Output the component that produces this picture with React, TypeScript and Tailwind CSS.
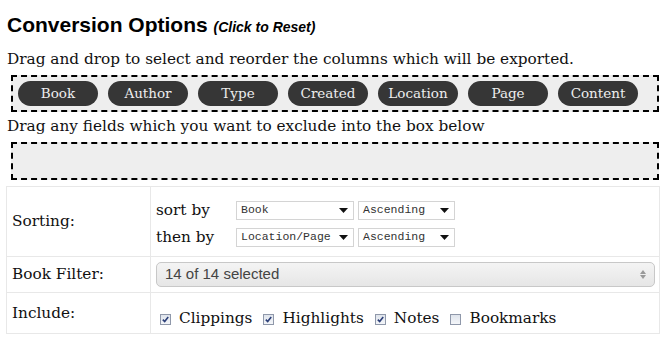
import React from "react";

const serif = "font-['DejaVu_Serif',Georgia,serif]";
const mono = "font-['Liberation_Mono','DejaVu_Sans_Mono',monospace]";

const columns = ["Book", "Author", "Type", "Created", "Location", "Page", "Content"];

const Select: React.FC<{ value: string; width: string }> = ({ value, width }) => (
    <div className={`${width} h-[19px] flex items-center justify-between border border-[#d4d4d4] bg-white pl-[4px] pr-[5px] ${mono} text-[11.5px] text-[#333]`}>
        <span>{value}</span>
        <svg width="9" height="5" viewBox="0 0 9 5"><path d="M0 0h9L4.5 5z" fill="#111" /></svg>
    </div>
);

const Check: React.FC<{ checked?: boolean; label: string }> = ({ checked, label }) => (
    <span className="inline-flex items-center mr-[11px]">
        <span className="w-[11px] h-[11px] border border-[#8f98aa] bg-gradient-to-b from-[#dfe4ec] to-[#f4f6f9] flex items-center justify-center mr-[8px] mt-[2px]">
            {checked && (
                <svg width="7" height="7" viewBox="0 0 7 7"><path d="M0.8 3.6 2.7 5.6 6.2 1" stroke="#2c3f78" strokeWidth="1.6" fill="none" /></svg>
            )}
        </span>
        <span>{label}</span>
    </span>
);

export default function App() {
    return (
        <div className={`w-[666px] h-[349px] bg-white text-[#111] px-[6px] pt-[11px] ${serif}`}>
            <h2 className="ml-[1px] font-['Liberation_Sans',Arial,sans-serif] font-bold text-[21px] leading-[28px] text-black">
                Conversion Options <span className="italic text-[14px]">(Click to Reset)</span>
            </h2>
            <p className="ml-[1px] mt-[7px] text-[15.3px] leading-[22px]">
                Drag and drop to select and reorder the columns which will be exported.
            </p>
            <div className="ml-[5px] mr-[1px] mt-[5px] border-2 border-dashed border-black bg-[#eeeeee] pt-[4px] pb-[4px] pl-[5px] flex gap-[10px]">
                {columns.map(c => (
                    <div key={c} className="w-[80px] h-[25px] rounded-full bg-[#363636] text-[#eee] text-[13.5px] flex items-center justify-center">
                        {c}
                    </div>
                ))}
            </div>
            <p className="ml-[1px] mt-[3px] text-[15.3px] leading-[22px]">
                Drag any fields which you want to exclude into the box below
            </p>
            <div className="ml-[5px] mr-[1px] mt-[5px] h-[38px] border-2 border-dashed border-black bg-[#eeeeee]" />
            <table className="mt-[6px] w-full border-collapse text-[15.3px]">
                <tbody>
                    <tr className="h-[70px]">
                        <td className="w-[144px] border border-[#e8e8e8] pl-[5px] align-middle">Sorting:</td>
                        <td className="border border-[#e8e8e8] pl-[5px]">
                            <div className="flex items-center h-[19px] mt-[4px]">
                                <span className="w-[80px]">sort by</span>
                                <Select value="Book" width="w-[118px]" />
                                <span className="w-[4px]" />
                                <Select value="Ascending" width="w-[97px]" />
                            </div>
                            <div className="flex items-center h-[19px] mt-[8px]">
                                <span className="w-[80px]">then by</span>
                                <Select value="Location/Page" width="w-[118px]" />
                                <span className="w-[4px]" />
                                <Select value="Ascending" width="w-[97px]" />
                            </div>
                        </td>
                    </tr>
                    <tr className="h-[36px]">
                        <td className="border border-[#e8e8e8] pl-[5px]">Book Filter:</td>
                        <td className="border border-[#e8e8e8] pl-[5px] pr-[4px]">
                            <div className="h-[25px] rounded-[5px] border border-[#c8c8c8] bg-gradient-to-b from-[#f4f4f4] to-[#e6e6e6] flex items-center justify-between pl-[8px] pr-[8px] font-['Liberation_Sans',Arial,sans-serif] text-[15px] text-[#444]">
                                <span>14 of 14 selected</span>
                                <svg width="6" height="9" viewBox="0 0 6 9"><path d="M0 4 3 0 6 4zM0 5 3 9 6 5z" fill="#999" /></svg>
                            </div>
                        </td>
                    </tr>
                    <tr className="h-[41px]">
                        <td className="border border-[#e8e8e8] pl-[5px]">Include:</td>
                        <td className="border border-[#e8e8e8] pl-[9px] pt-[10px]">
                            <div className="flex items-center">
                                <Check checked label="Clippings" />
                                <Check checked label="Highlights" />
                                <Check checked label="Notes" />
                                <Check label="Bookmarks" />
                            </div>
                        </td>
                    </tr>
                </tbody>
            </table>
        </div>
    );
}
